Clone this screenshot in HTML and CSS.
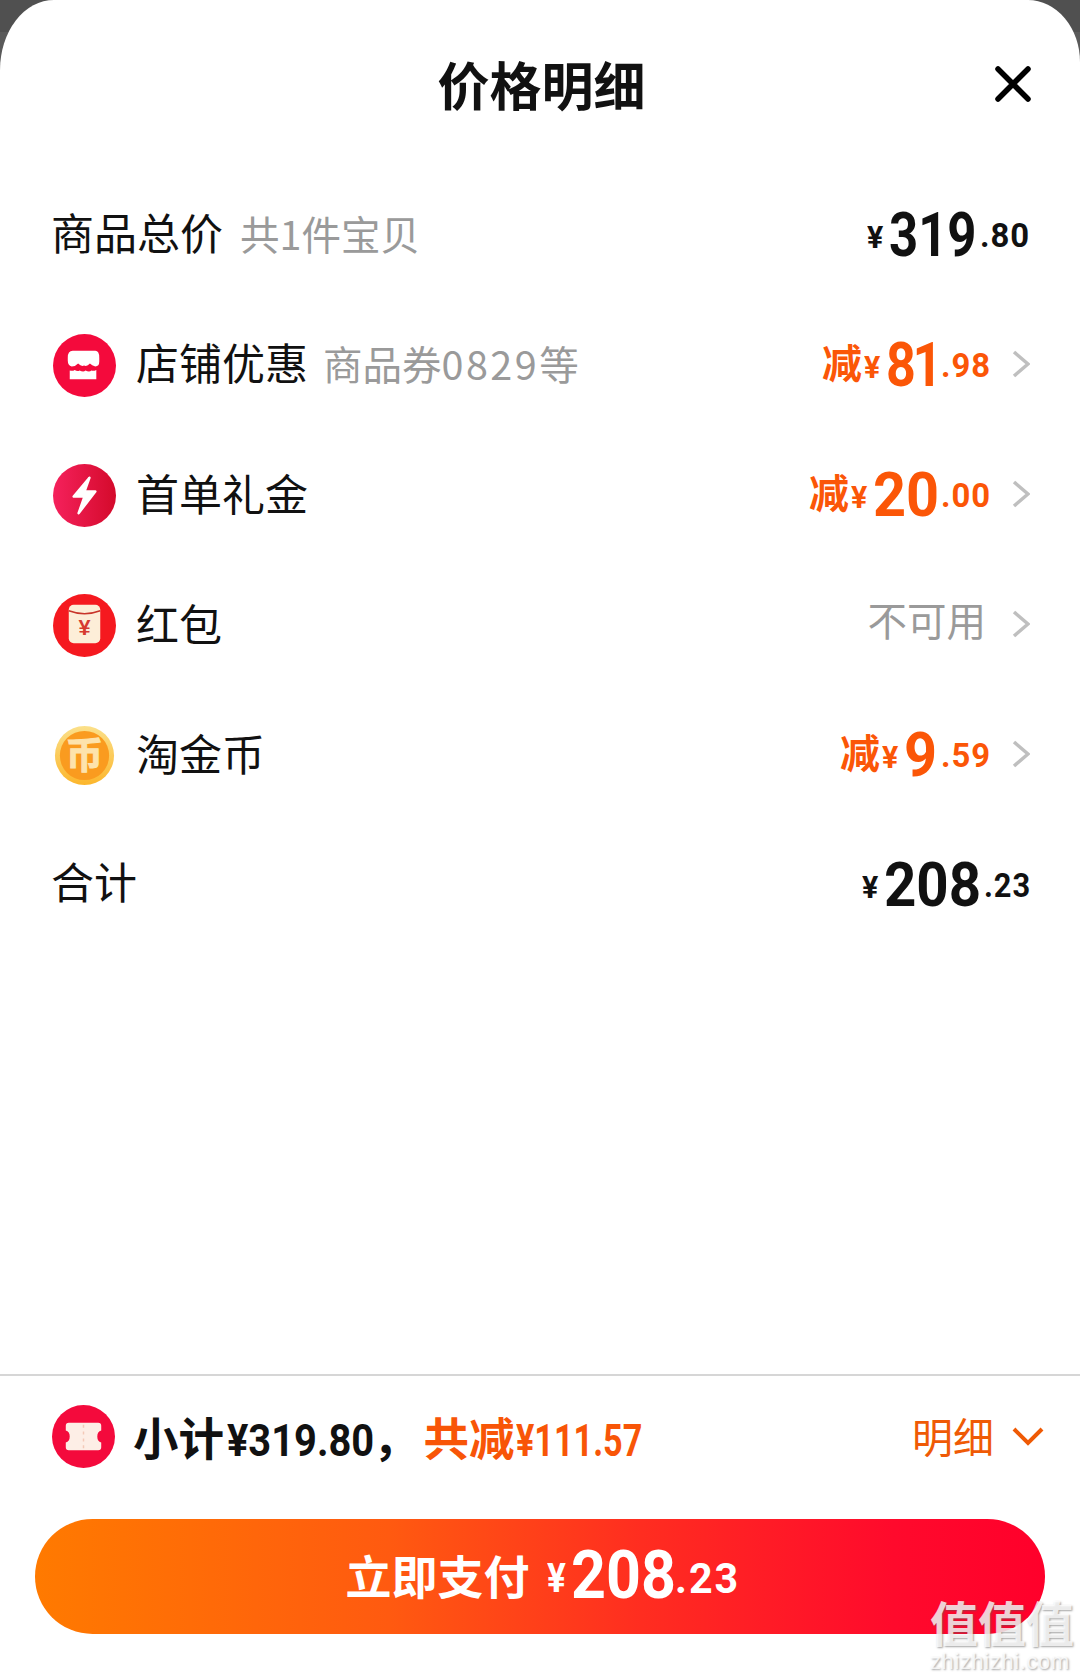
FILE: index.html
```html
<!DOCTYPE html>
<html lang="zh">
<head>
<meta charset="utf-8">
<title>价格明细</title>
<link rel="stylesheet" href="styles.css">
</head>
<body>
<main class="sheet">
  <header class="head">
    <span></span>
    <h1 class="title">价格明细</h1>
    <svg class="close" viewBox="0 0 36 36"><path d="M3 3 33 33M33 3 3 33"/></svg>
  </header>

  <section class="rows">
    <div class="row">
      <div class="label label-plain">商品总价<span class="note note-first">共1件宝贝</span></div>
      <div class="price price-plain"><span class="yen">¥</span><span class="big w84">319</span><span class="dec">.80</span></div>
    </div>
    <div class="row">
      <svg class="ico" viewBox="0 0 64 64"><circle cx="32" cy="32" r="32" fill="#f40a3c"/><path fill="#fff" d="M20 17H43Q47 17 47 24V28Q47 33 43 33 39.500 32 37.500 30 34.500 33.500 31.500 32 29 33.500 25.500 30 23 33 19 33 15 32 15 27V24Q15 17 20 17Z"/><path fill="#fff" d="M17 37Q20 38 22 36.500 25 38.500 27 37 31 39 33 37 37 39 39 37 41 38 44 36.500V46H17Z"/></svg>
      <div class="label">店铺优惠<span class="note">商品券<span class="note-num">0829</span>等</span></div>
      <div class="price"><span class="jian">减</span><span class="yen">¥</span><span class="big w48">81</span><span class="dec">.98</span></div>
      <svg class="chev" viewBox="0 0 18 28"><path d="M2 2 16 14 2 26"/></svg>
    </div>
    <div class="row">
      <svg class="ico" viewBox="0 0 64 64"><defs><linearGradient id="boltg" x1="0" x2="1" y1="0" y2="0"><stop offset="0" stop-color="#f5215c"/><stop offset="1" stop-color="#d40a2b"/></linearGradient></defs><circle cx="32" cy="32" r="32" fill="url(#boltg)"/><path fill="#fff" stroke="#fff" stroke-width="2.500" stroke-linejoin="round" d="M37 14 21 33H32L26 50 43 28H32Z"/></svg>
      <div class="label">首单礼金</div>
      <div class="price"><span class="jian">减</span><span class="yen">¥</span><span class="big w61">20</span><span class="dec">.00</span></div>
      <svg class="chev" viewBox="0 0 18 28"><path d="M2 2 16 14 2 26"/></svg>
    </div>
    <div class="row">
      <svg class="ico" viewBox="0 0 64 64"><circle cx="32" cy="32" r="32" fill="#f5191f"/><rect x="16" y="11" width="32" height="39" rx="5" fill="#fdeed8"/><path fill="none" stroke="#c8352a" stroke-width="1.500" d="M16 17Q32 23 48 17"/><text class="yen-mark" x="32" y="42" text-anchor="middle">¥</text></svg>
      <div class="label">红包</div>
      <div class="muted">不可用</div>
      <svg class="chev" viewBox="0 0 18 28"><path d="M2 2 16 14 2 26"/></svg>
    </div>
    <div class="row">
      <svg class="ico" viewBox="0 0 64 64"><defs><linearGradient id="coing" x1="0" x2="0" y1="0" y2="1"><stop offset="0" stop-color="#fbe08a"/><stop offset="1" stop-color="#fcb62c"/></linearGradient></defs><circle cx="32" cy="32" r="30" fill="url(#coing)"/><circle cx="32" cy="32" r="25" fill="#fa9b1f"/><text class="coin-mark" x="32" y="46" text-anchor="middle">币</text></svg>
      <div class="label">淘金币</div>
      <div class="price"><span class="jian">减</span><span class="yen">¥</span><span class="big w30">9</span><span class="dec">.59</span></div>
      <svg class="chev" viewBox="0 0 18 28"><path d="M2 2 16 14 2 26"/></svg>
    </div>
    <div class="row">
      <div class="label label-total">合计</div>
      <div class="price price-total"><span class="yen">¥</span><span class="big w94">208</span><span class="dec dec-total">.23</span></div>
    </div>
  </section>

  <footer class="foot">
    <div class="summary">
      <svg class="ico-sum" viewBox="0 0 64 64"><circle cx="32" cy="32" r="32" fill="#f40a3c"/><path fill="#fdeee6" d="M17 18H47Q50 18 50 21V26Q46 27 46 32 46 37 50 38V43Q50 46 47 46H17Q14 46 14 43V38Q18 37 18 32 18 27 14 26V21Q14 18 17 18Z"/><path fill="none" stroke="#f4c9b8" stroke-width="1.500" stroke-dasharray="3 4" d="M32 20V45"/></svg>
      <div class="sum-text">小计<span class="num num-a">¥319.80</span>，<span class="sum-off">共减<span class="num num-b">¥111.57</span></span></div>
      <div class="detail">明细<svg class="chev-down" viewBox="0 0 32 20"><path d="M2 3 16 17 30 3"/></svg></div>
    </div>
    <button class="pay"><span class="pay-label">立即支付</span><span class="pay-yen">¥</span><span class="pay-big">208</span><span class="pay-dec">.23</span></button>
  </footer>
  <div class="mark" aria-hidden="true"><div class="mark-cn">值值值</div><div class="mark-en">zhizhizhi.com</div></div>
</main>
</body>
</html>
```
FILE: styles.css
```css
* { box-sizing: border-box; }
html, body { margin: 0; padding: 0; }
body {
  width: 1080px;
  height: 1679px;
  overflow: hidden;
  background: linear-gradient(#505050 0 32px, #5a5a5a 32px);
  font-family: "Noto Sans CJK SC", "Noto Sans", sans-serif;
  color: #111;
}
.sheet {
  position: relative;
  width: 1080px;
  height: 1679px;
  background: #fff;
  border-radius: 54px 52px 0 0 / 70px 62px 0 0;
  display: flex;
  flex-direction: column;
}
.head {
  height: 169px;
  padding: 0 49px 0 52px;
  display: grid;
  grid-template-columns: 1fr auto 1fr;
  align-items: center;
}
.title {
  margin: 0 0 2px;
  font-size: 52px;
  font-weight: 700;
  line-height: 70px;
  color: #111;
}
.close {
  justify-self: end;
  width: 36px;
  height: 36px;
  margin-bottom: 2px;
  fill: none;
  stroke: #000;
  stroke-width: 5.500;
  stroke-linecap: round;
}
.rows { display: flex; flex-direction: column; }
.row {
  height: 130px;
  padding: 0 50px 0 52px;
  display: flex;
  align-items: center;
}
.ico { width: 63px; height: 63px; flex: none; margin: 2px 20px 0 1px; }
.label {
  flex: 1;
  font-size: 43px;
  line-height: 60px;
  margin-bottom: 5px;
  color: #111;
  white-space: nowrap;
}
.label-plain { margin-left: -1px; margin-bottom: 5px; }
.label-total { margin-left: -1px; margin-bottom: 8px; }
.note { margin-left: 15px; font-size: 39.500px; color: #9a9a9a; }
.note-first { margin-left: 17px; }
.note-num { letter-spacing: 2.500px; }
.price {
  display: flex;
  align-items: center;
  font-family: "Roboto", sans-serif;
  font-weight: 700;
  color: #fb5607;
  white-space: nowrap;
  line-height: 60px;
}
.price-plain { color: #111; padding-right: 5px; }
.price-total { color: #111; padding-right: 3px; }
.yen, .big, .dec { display: block; flex: none; transform-origin: left center; }
.yen { width: 16px; margin: 6px 6px 0 0; font-size: 32px; transform: scaleX(.95); }
.big { font-size: 62px; margin: 2px 7px 0 0; }
.w84 { width: 84px; transform: scaleX(.82); }
.w48 { width: 48px; transform: scaleX(.84); letter-spacing: -4px; }
.w61 { width: 61px; transform: scaleX(.93); }
.w30 { width: 30px; transform: scaleX(.93); }
.w94 { width: 94px; transform: scaleX(.91); }
.dec { width: 45px; margin-top: 4px; font-size: 33.500px; letter-spacing: 1px; transform: scaleX(.98); }
.dec-total { width: 43px; transform: scaleX(.92); margin-left: -1px; }
.jian {
  font-family: "Noto Sans CJK SC", sans-serif;
  font-size: 40px;
  margin: 0 2px 7px -1px;
}
.chev { width: 18px; height: 28px; margin-left: 26px; flex: none; fill: none; stroke: #bfbfbf; stroke-width: 3.500; }
.muted { font-size: 39.500px; color: #9a9a9a; line-height: 60px; margin-bottom: 10px; }
.yen-mark { font-family: "Liberation Sans", sans-serif; font-size: 22px; font-weight: 700; fill: #d63a30; }
.coin-mark { font-family: "Noto Sans CJK SC", sans-serif; font-size: 38px; font-weight: 700; fill: #fde3ac; stroke: #fde3ac; stroke-width: 1; }

.foot {
  margin-top: auto;
  border-top: 2px solid #d6d6d6;
  height: 305px;
  display: flex;
  flex-direction: column;
}
.summary {
  height: 130px;
  margin-bottom: 13px;
  padding: 0 36px 10px 52px;
  display: flex;
  align-items: center;
}
.ico-sum { width: 63px; height: 63px; flex: none; margin-right: 18px; }
.sum-text {
  flex: 1;
  font-size: 45.500px;
  font-weight: 700;
  line-height: 64px;
  margin-top: 4px;
  white-space: nowrap;
}
.num {
  display: inline-block;
  font-family: "Roboto", sans-serif;
  font-weight: 700;
  font-size: 45px;
  transform-origin: left center;
}
.num-a { width: 146px; margin-left: 3px; transform: scaleX(.885); }
.num-b { width: 126px; margin-left: 1px; transform: scaleX(.76); }
.sum-off { color: #f85507; margin-left: 5px; }
.detail {
  display: flex;
  align-items: center;
  font-size: 41px;
  line-height: 60px;
  color: #ef5a05;
  margin-bottom: 3px;
}
.chev-down { width: 32px; height: 20px; margin-left: 18px; fill: none; stroke: #ef5a05; stroke-width: 4; margin-top: 3px; }
.pay {
  align-self: center;
  flex: none;
  width: 1010px;
  height: 115px;
  border: 0;
  border-radius: 58px;
  padding: 0;
  background: linear-gradient(90deg, #ff7a00 0%, #ff5a10 35%, #ff2d20 60%, #ff0a2c 85%, #ff002b 100%);
  color: #fff;
  font-family: "Noto Sans CJK SC", sans-serif;
  display: flex;
  align-items: center;
  justify-content: center;
  white-space: nowrap;
}
.pay-label { font-size: 46px; font-weight: 700; line-height: 64px; margin: 0 17px 6px 0; }
.pay-yen, .pay-big, .pay-dec { display: block; flex: none; font-family: "Roboto", sans-serif; font-weight: 700; line-height: 70px; transform-origin: left center; }
.pay-yen { width: 19px; margin: 4px 5px 0 0; font-size: 40px; transform: scaleX(.88); }
.pay-big { width: 98px; margin: 0 6px 4px 0; font-size: 67px; transform: scaleX(.91); }
.pay-dec { width: 60px; margin-top: 4px; font-size: 42px; letter-spacing: 2px; transform: scaleX(.98); }

.mark {
  position: absolute;
  left: 930px;
  top: 1592px;
  width: 146px;
  color: rgba(255, 255, 255, 0.78);
  text-shadow: 1px 1px 2px rgba(90, 90, 90, 0.55);
  pointer-events: none;
}
.mark-cn { font-size: 48px; font-weight: 700; line-height: 58px; white-space: nowrap; }
.mark-en { font-family: "Liberation Sans", sans-serif; font-size: 22px; letter-spacing: .6px; line-height: 24px; white-space: nowrap; }
```
